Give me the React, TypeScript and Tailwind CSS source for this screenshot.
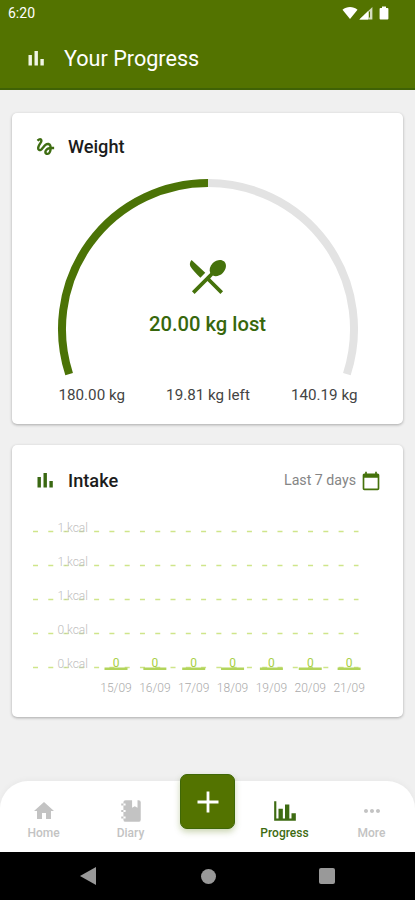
import type { ReactNode } from 'react'
import { MdGesture, MdHome, MdMoreHoriz, MdCalendarToday } from 'react-icons/md'

const GRID_LINES = [
  { label: '1.kcal', y: 21.5 },
  { label: '1.kcal', y: 55.5 },
  { label: '1.kcal', y: 89.5 },
  { label: '0.kcal', y: 123.5 },
  { label: '0.kcal', y: 157.5 },
]

const DAYS = [
  { date: '15/09', value: 0 },
  { date: '16/09', value: 0 },
  { date: '17/09', value: 0 },
  { date: '18/09', value: 0 },
  { date: '19/09', value: 0 },
  { date: '20/09', value: 0 },
  { date: '21/09', value: 0 },
]

function BarsIcon({ className }: { className?: string }) {
  return (
    <svg viewBox="0 0 18 18" className={className} fill="currentColor">
      <rect x="1.5" y="5" width="3.4" height="10.5" />
      <rect x="7.5" y="1" width="3.4" height="14.5" />
      <rect x="13.4" y="9" width="3.4" height="6.5" />
    </svg>
  )
}

function CutleryIcon() {
  return (
    <svg viewBox="0 0 24 24" className="h-[45px] w-[45px] text-[#45720b]" fill="currentColor">
      <path d="M3.500 3.200L10.800 10 8.200 12.600C6 10.500 3.900 8.500 2.900 6.700 2.300 5.500 2.600 4.200 3.500 3.200z" />
      <path d="M14.880 11.530c1.530.71 3.680.21 5.270-1.380 1.910-1.910 2.280-4.650.81-6.120-1.460-1.460-4.200-1.100-6.120.81-1.590 1.590-2.090 3.740-1.380 5.270L3.700 19.870l1.410 1.410L12 14.410l6.880 6.880 1.410-1.410L13.410 13l1.470-1.470z" />
    </svg>
  )
}

function NotebookIcon() {
  return (
    <svg viewBox="0 0 24 24" className="h-[26px] w-[26px]" fill="currentColor">
      <path d="M3 7V5h2V4a2 2 0 0 1 2-2h6v7l2.5-1.5L18 9V2h1a2 2 0 0 1 2 2v16a2 2 0 0 1-2 2H7a2 2 0 0 1-2-2v-1H3v-2h2v-4H3v-2h2V7H3m4 4H5v2h2v-2m0-4V5H5v2h2m0 12v-2H5v2h2z" />
    </svg>
  )
}

function ChartIcon() {
  return (
    <svg viewBox="0 0 24 24" className="h-[26px] w-[26px]" fill="currentColor">
      <path d="M22 21H2V3h2v16h2v-9h4v9h2V6h4v13h2v-5h4v7z" />
    </svg>
  )
}

function StatusBar() {
  return (
    <div className="flex h-[26px] items-center justify-between pl-2 pr-[26px]">
      <span className="text-[14px] leading-none">6:20</span>
      <svg viewBox="0 0 47 16" className="h-4 w-[47px]" fill="currentColor">
        <path d="M0.5 4.8C4.8 1.1 11.2 1.1 15.5 4.8L8 14z" />
        <path d="M30.4 2v12.5H17.4z" fillOpacity="0.75" />
        <path d="M26 6.3v8.2h-8.6z" />
        <path d="M27 6.5h1v6h-1z" fill="#537300" />
        <path d="M38 3h2V1.5h4V3h1.500q.9 0 .9.9v9.700q0 .9-.9.9h-7q-.9 0-.9-.9V3.900q0-.9.9-.9z" />
      </svg>
    </div>
  )
}

function Card({ children, className }: { children: ReactNode; className: string }) {
  return (
    <section className={`rounded-[5px] bg-white shadow-[0_1px_3px_rgba(0,0,0,0.3)] ${className}`}>{children}</section>
  )
}

function WeightCard() {
  return (
    <Card className="h-[311px] pt-[22px]">
      <div className="flex h-6 items-center pl-[22px]">
        <MdGesture className="-mt-[2px] h-[23px] w-[23px] text-[#3f6d12]" />
        <h2 className="ml-[11px] text-[18.200px] font-medium leading-6 text-[#1c1c1c]">Weight</h2>
      </div>
      <div className="mt-3 grid h-[212px] justify-center">
        <svg viewBox="0 0 312 212" className="col-start-1 row-start-1 h-[212px] w-[312px]" fill="none" strokeWidth="8">
          <path d="M156 12A146 146 0 0 1 294.86 203.12" stroke="#e3e3e3" />
          <path d="M17.14 203.12A146 146 0 0 1 156 12" stroke="#4b7306" />
        </svg>
        <div className="col-start-1 row-start-1 flex flex-col items-center pt-[83px] text-[#37670c]">
          <CutleryIcon />
          <p className="mt-[13px] text-[20.200px] font-medium leading-6">20.00 kg lost</p>
        </div>
      </div>
      <div className="flex justify-between pl-[46.500px] pr-[45.500px] text-[15.200px] leading-6 text-[#444]">
        <span>180.00 kg</span>
        <span>19.81 kg left</span>
        <span>140.19 kg</span>
      </div>
    </Card>
  )
}

function IntakeChart() {
  return (
    <svg viewBox="0 0 366 190" className="ml-[13px] mt-[17px] h-[190px] w-[366px]" fontFamily="Roboto, sans-serif" fontWeight="300">
      {GRID_LINES.map(({ label, y }) => (
        <g key={y}>
          <path d={`M8 ${y}H333.5`} stroke="#cfe58a" strokeWidth="1.4" strokeDasharray="5 10.28" />
          <text x="63" y={y} textAnchor="end" fontSize="12" fill="#bdbdbd">{label}</text>
        </g>
      ))}
      {DAYS.map(({ date, value }, i) => {
        const x = 91 + i * 38.85
        return (
          <g key={date} textAnchor="middle">
            <rect x={x - 11.5} y="157.5" width="23" height="2.5" fill="#b2d45b" />
            <text x={x} y="157" fontSize="12" fill="#a8cf45" fontWeight="400">{value}</text>
            <text x={x} y="182" fontSize="12" fill="#aaa">{date}</text>
          </g>
        )
      })}
    </svg>
  )
}

function IntakeCard() {
  return (
    <Card className="h-[272px] pt-6">
      <div className="flex h-6 items-center pl-6 pr-[22px]">
        <BarsIcon className="h-[18px] w-[18px] text-[#3a6812]" />
        <h2 className="ml-[14px] flex-1 text-[18.200px] font-medium leading-6 text-[#1c1c1c]">Intake</h2>
        <span className="mr-[5px] text-[14.200px] text-[#858585]">Last 7 days</span>
        <MdCalendarToday className="h-5 w-5 text-[#45720b]" />
      </div>
      <IntakeChart />
    </Card>
  )
}

function Tab({ label, active, children }: { label: string; active?: boolean; children: ReactNode }) {
  return (
    <button className={`flex flex-1 flex-col items-center pt-[17px] ${active ? 'text-[#3e6b12]' : 'text-[#c3c3c3]'}`}>
      <span className="flex h-[26px] items-center">{children}</span>
      <span className="mt-[2px] text-[12px] font-medium leading-[14px]">{label}</span>
    </button>
  )
}

function TabBar() {
  return (
    <nav className="flex h-[71px] rounded-t-[28px] bg-white shadow-[0_-1px_6px_rgba(0,0,0,0.04)]">
      <Tab label="Home"><MdHome className="h-6 w-6" /></Tab>
      <Tab label="Diary"><NotebookIcon /></Tab>
      <div className="flex w-[67px] justify-center">
        <button className="-mt-[7px] flex h-[55px] w-[55px] items-center justify-center rounded-[7px] border border-[#3f6707] bg-[#537300] shadow-[0_3px_6px_rgba(83,115,0,0.3)]">
          <svg viewBox="0 0 22 22" className="h-[22px] w-[22px]" stroke="white" strokeWidth="2.8">
            <path d="M0.500 11h21M11 0.500v21" />
          </svg>
        </button>
      </div>
      <Tab label="Progress" active><ChartIcon /></Tab>
      <Tab label="More"><MdMoreHoriz className="h-6 w-6" /></Tab>
    </nav>
  )
}

function SystemNav() {
  return (
    <div className="flex h-12 items-center justify-around bg-black px-[28px]">
      <svg viewBox="0 0 18 18" className="h-[18px] w-[18px]" fill="#999"><path d="M16 0v18L0 9z" /></svg>
      <span className="h-[15px] w-[15px] rounded-full bg-[#999]" />
      <span className="h-4 w-4 rounded-[2px] bg-[#999]" />
    </div>
  )
}

export default function App() {
  return (
    <div className="flex h-[900px] w-[415px] flex-col overflow-hidden bg-[#f0f0f0] font-[Roboto,sans-serif]">
      <header className="h-[90px] shrink-0 border-b-2 border-[#3f6205] bg-[#537300] text-white">
        <StatusBar />
        <div className="mt-[21px] flex h-6 items-center pl-[27px]">
          <BarsIcon className="h-[18px] w-[18px] text-[#f0f5e4]" />
          <h1 className="ml-[19px] text-[21.600px] leading-6">Your Progress</h1>
        </div>
      </header>
      <main className="flex flex-1 flex-col gap-[21px] px-3 pt-[23px]">
        <WeightCard />
        <IntakeCard />
      </main>
      <TabBar />
      <SystemNav />
    </div>
  )
}
